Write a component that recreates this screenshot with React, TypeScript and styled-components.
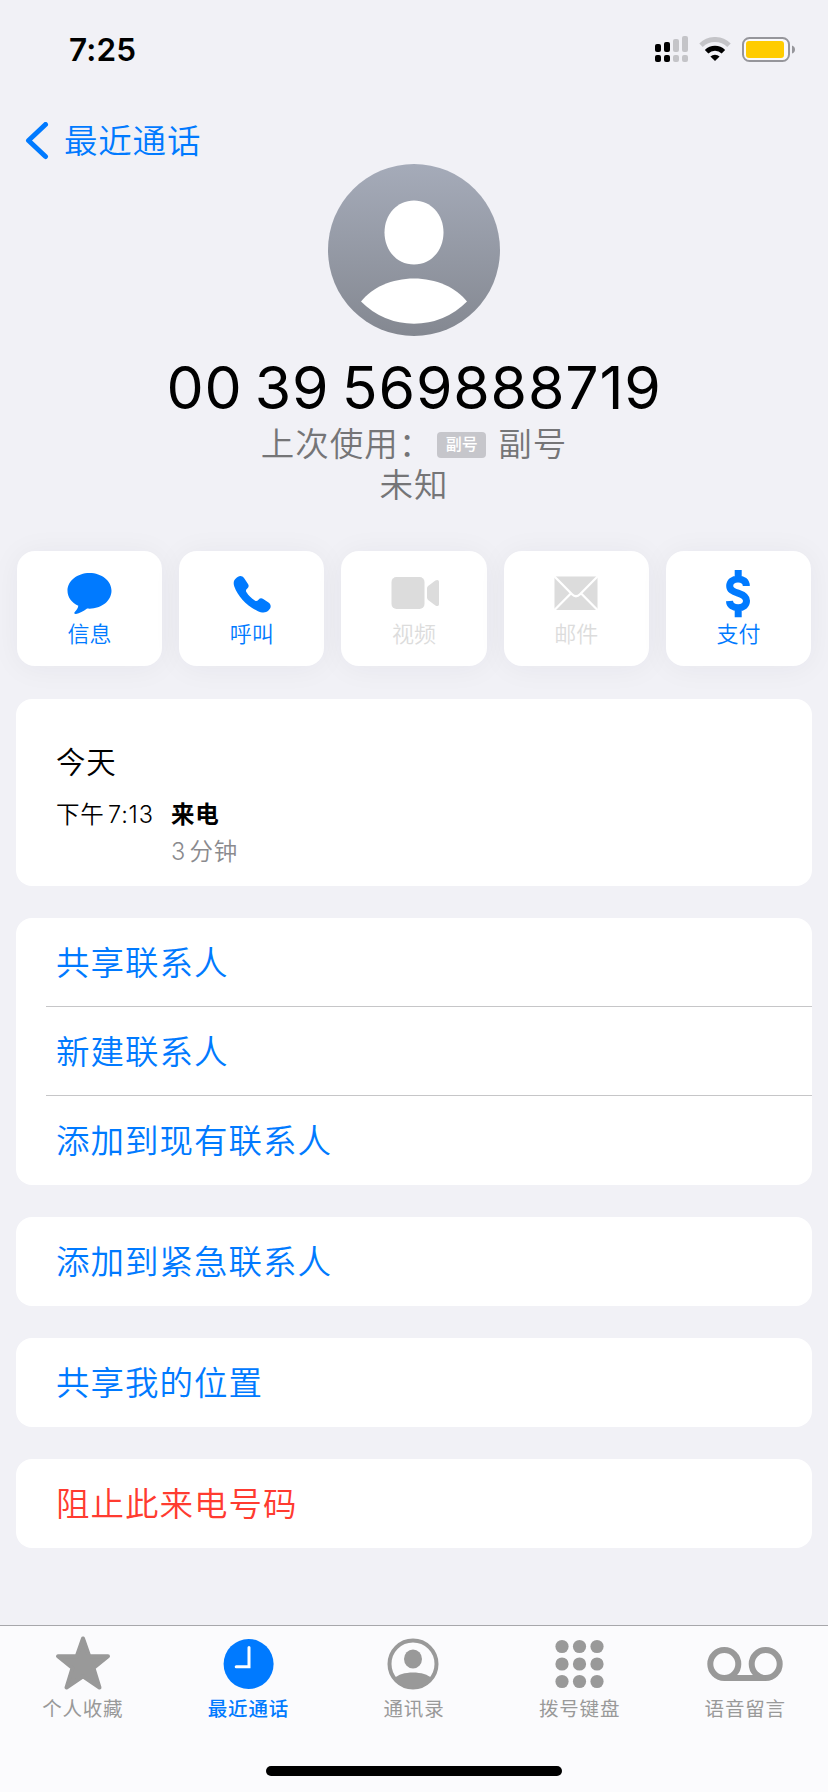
import React from "react";
import styled, { createGlobalStyle } from "styled-components";

const BLUE = "#007aff";
const RED = "#ff3b30";
const GREY = "#999999";
const FAINT = "#dcdcdc";

const GlobalStyle = createGlobalStyle`
  * { box-sizing: border-box; }
  body {
    margin: 0;
    background: #f1f1f6;
    color: #000;
    font-family: Inter, "Noto Sans CJK SC", sans-serif;
    -webkit-font-smoothing: antialiased;
  }
`;

const Screen = styled.div`
  width: 828px;
  height: 1792px;
  display: flex;
  flex-direction: column;
  overflow: hidden;
`;

const StatusBar = styled.header`
  height: 100px;
  padding: 0 32px 1px 69px;
  display: flex;
  align-items: center;
  justify-content: space-between;
`;

const Clock = styled.time`
  font-size: 31.5px;
  font-weight: 600;
  letter-spacing: 0.2px;
`;

const StatusIcons = styled.div`
  display: flex;
  align-items: center;
  gap: 11px;
`;

const BackLink = styled.a`
  height: 64px;
  padding: 17px 0 0 25px;
  display: flex;
  align-items: center;
  gap: 15px;
  color: ${BLUE};
  font-size: 33.5px;
  font-weight: 350;
  line-height: 48px;
  letter-spacing: 0.8px;
`;

const Profile = styled.section`
  height: 387px;
  display: flex;
  flex-direction: column;
  align-items: center;
`;

const PhoneNumber = styled.h1`
  margin: 17px 0 1px;
  font-size: 59px;
  font-weight: 400;
  line-height: 70px;
  letter-spacing: 0.8px;
  word-spacing: -5px;
  white-space: pre;
`;

const ProfileLine = styled.p`
  margin: 0;
  height: 41px;
  display: flex;
  align-items: center;
  color: #757577;
  font-size: 33.5px;
  font-weight: 350;
  line-height: 41px;
  letter-spacing: 1px;
`;

const LineBadge = styled.span`
  width: 49px;
  height: 26px;
  margin: 0 12px 0 4px;
  border-radius: 4px;
  background: #c6c6cb;
  color: #fff;
  font-size: 16px;
  font-weight: 500;
  line-height: 25px;
  letter-spacing: 0;
  text-align: center;
`;

const Actions = styled.nav`
  padding: 0 17px;
  display: grid;
  grid-template-columns: repeat(5, 1fr);
  gap: 17px;
`;

const Action = styled.button<{ $off?: boolean }>`
  height: 115px;
  padding: 17px 0 0;
  border: 0;
  border-radius: 18px;
  background: #fff;
  box-shadow: 0 2px 30px rgba(40, 40, 50, 0.05);
  display: flex;
  flex-direction: column;
  align-items: center;
  color: ${(p) => (p.$off ? FAINT : BLUE)};
  font-family: inherit;
  font-size: 22px;
  font-weight: 350;
  line-height: 32px;
`;

const Card = styled.section`
  margin: 33px 16px 0;
  border-radius: 16px;
  background: #fff;
  overflow: hidden;
  & + & { margin-top: 32px; }
`;

const CallLog = styled(Card)`
  height: 187px;
  padding: 43px 40px 0;
`;

const Day = styled.h2`
  margin: 0;
  font-size: 29.5px;
  font-weight: 350;
  line-height: 41px;
  letter-spacing: 0.8px;
`;

const Call = styled.div`
  margin-top: 13px;
  display: grid;
  grid-template-columns: 115px 1fr;
  font-size: 23.5px;
  font-weight: 350;
  line-height: 37px;
  letter-spacing: 0.8px;
  word-spacing: -4px;
`;

const CallKind = styled.span`
  font-weight: 600;
`;

const CallLength = styled.span`
  grid-column: 2;
  color: #8a8a8e;
`;

const Row = styled.a<{ $danger?: boolean }>`
  height: 88px;
  padding: 0 0 4px 40px;
  display: flex;
  align-items: center;
  color: ${(p) => (p.$danger ? RED : BLUE)};
  font-size: 33.5px;
  font-weight: 350;
  letter-spacing: 1px;
  &:last-child { height: 89px; }
`;

const Divider = styled.hr`
  height: 1px;
  margin: 0 0 0 30px;
  border: 0;
  background: #c6c6c8;
`;

const TabBar = styled.footer`
  margin-top: auto;
  height: 167px;
  border-top: 1px solid #a7a7ab;
  background: #fbfbfd;
  display: flex;
  flex-direction: column;
  align-items: center;
`;

const Tabs = styled.nav`
  width: 100%;
  height: 140px;
  display: grid;
  grid-template-columns: repeat(5, 1fr);
`;

const Tab = styled.a<{ $active?: boolean }>`
  padding: 9px 0 0;
  display: flex;
  flex-direction: column;
  align-items: center;
  color: ${(p) => (p.$active ? BLUE : GREY)};
  font-size: 19.5px;
  font-weight: ${(p) => (p.$active ? 500 : 400)};
  line-height: 28px;
  letter-spacing: 0.8px;
`;

const HomeIndicator = styled.div`
  width: 296px;
  height: 10px;
  border-radius: 5px;
  background: #000;
`;

const SignalIcon = () => (
  <svg width="33" height="27" viewBox="0 0 33 27">
    {[8, 6, 3, 0].map((top, i) => (
      <g key={top} fill={i < 2 ? "#000" : "#c4c4c8"}>
        <rect x={i * 9} y={top} width="6" height={16 - top} rx="2" />
        <rect x={i * 9} y="19" width="6" height="7" rx="2" />
      </g>
    ))}
  </svg>
);

const WifiIcon = () => (
  <svg width="32" height="25" viewBox="0 0 32 25" fill="none" strokeWidth="5">
    <path d="M2 8.2a20 20 0 0 1 28 0" stroke="#c4c4c8" />
    <path d="M7.6 14.7a12 12 0 0 1 16.8 0" stroke="#000" />
    <path d="M16 24l-4.6-4.5a6.7 6.7 0 0 1 9.2 0z" fill="#000" />
  </svg>
);

const BatteryIcon = () => (
  <svg width="54" height="25" viewBox="0 0 54 25">
    <rect x="1" y="1" width="46" height="23" rx="6.5" fill="#fff" fillOpacity=".6" stroke="#96969b" strokeWidth="2" />
    <rect x="4" y="4" width="38" height="17" rx="3" fill="#ffcc00" />
    <path d="M50 8.500q3 1 3 4t-3 4z" fill="#96969b" />
  </svg>
);

const ChevronIcon = () => (
  <svg width="24" height="38" viewBox="0 0 24 38">
    <path d="M20.500 2.500 3.500 18.500l17 16" fill="none" stroke={BLUE} strokeWidth="5" strokeLinecap="round" strokeLinejoin="round" />
  </svg>
);

const Avatar = () => (
  <svg width="172" height="172" viewBox="0 0 172 172">
    <defs>
      <linearGradient id="avatar" x1="0" y1="0" x2="0" y2="1">
        <stop offset="0" stopColor="#a5abb9" />
        <stop offset="1" stopColor="#848891" />
      </linearGradient>
    </defs>
    <circle cx="86" cy="86" r="86" fill="url(#avatar)" />
    <path d="M86 36.500c17 0 29.500 14 29.500 32s-12.500 32-29.500 32-29.500-14-29.500-32 12.500-32 29.500-32z" fill="#fff" />
    <path d="M33 137.500c11-14 31-23 53-23s42 9 53 23a74.500 74.500 0 0 1-106 0z" fill="#fff" />
  </svg>
);

const ActionIcon = ({ children }: { children: React.ReactNode }) => (
  <svg width="52" height="50" viewBox="0 0 52 50" fill="currentColor">{children}</svg>
);

const actions = [
  {
    label: "信息",
    icon: <path d="M25.500 5c12.200 0 22 7.900 22 17.800s-9.800 17.900-22 17.900c-.8 0-1.600 0-2.400-.1-3.800 2.800-7.600 5-11.100 5.400-1.900.1-2.200-1-1.200-2 1.800-1.700 3.200-3.800 3.500-6.200-6.800-3.300-10.800-8.600-10.800-15C3.500 12.900 13.300 5 25.500 5z" />,
  },
  {
    label: "呼叫",
    icon: <path d="M9.800 10.500c2.800-3.300 6.200-3.400 8.400-.3l3.800 5.700c1.100 1.800.8 3.300-.7 4.700-1.500 1.300-1.700 2.300-.8 3.700 2.100 3.300 5 6.100 8.300 8.200 1.400.9 2.400.7 3.700-.8 1.400-1.500 2.900-1.800 4.700-.7l5.300 3.500c3 2.200 2.900 5.600-.3 8.200-2.500 2.200-6 2.300-10.700.2C20.100 37.600 11.800 28 8.300 18.500c-1.200-3.500-.6-6.200 1.500-8z" />,
  },
  {
    label: "视频",
    off: true,
    icon: (
      <>
        <rect x="3.500" y="9" width="33" height="32" rx="5" />
        <path d="M39 20.500c0-1 .4-1.800 1.100-2.400l7.300-5.500c1.800-1.300 3.600-.7 3.600 1.400v22c0 2.100-1.800 2.700-3.600 1.400l-7.300-5.500c-.7-.6-1.100-1.400-1.100-2.400z" />
      </>
    ),
  },
  {
    label: "邮件",
    off: true,
    icon: (
      <>
        <rect x="4.500" y="8.500" width="43" height="33.500" rx="1" />
        <path d="M4 8l18 18.200q4 4 8 0L48 8M4 42.500l16.800-17M48 42.500l-16.800-17" fill="none" stroke="#fff" strokeWidth="2.300" />
      </>
    ),
  },
  {
    label: "支付",
    icon: (
      <path
        d="M34.300 18C34.300 13.500 31 11 26 11S17.700 13.700 17.700 18c0 3.800 2.900 5.400 8.400 7.200s8.400 3.600 8.400 7.600c0 4.400-3.400 6.900-8.400 6.900s-8.400-2.400-8.600-6.700M26.200 2v8M26.200 40v9.300"
        fill="none"
        stroke="currentColor"
        strokeWidth="7"
      />
    ),
  },
];

const TabIcon = ({ children, width = 60 }: { children: React.ReactNode; width?: number }) => (
  <svg width={width} height="60" viewBox={`0 0 ${width} 60`} fill="currentColor">{children}</svg>
);

const tabs = [
  {
    label: "个人收藏",
    icon: <TabIcon><path d="M30 3.500l6.300 17.800H55L40.500 33l6 19.500L30 41.300 13.500 52.500l6-19.500L5 21.300h18.700z" stroke="currentColor" strokeWidth="4" strokeLinejoin="round" /></TabIcon>,
  },
  {
    label: "最近通话",
    active: true,
    icon: (
      <TabIcon>
        <circle cx="30.600" cy="29" r="25" />
        <path d="M31 12.500v19.200H18.200" fill="none" stroke="#fff" strokeWidth="3" strokeLinecap="round" />
      </TabIcon>
    ),
  },
  {
    label: "通讯录",
    icon: (
      <TabIcon>
        <circle cx="29" cy="29" r="23.500" fill="none" stroke="currentColor" strokeWidth="4" />
        <ellipse cx="29" cy="24" rx="9" ry="9.500" />
        <path d="M10 43.500c4-4 11-6 19-6s15 2 19 6a24 24 0 0 1-38 0z" />
      </TabIcon>
    ),
  },
  {
    label: "拨号键盘",
    icon: (
      <TabIcon>
        {[0, 1, 2].flatMap((r) => [0, 1, 2].map((c) => <circle key={`${r}${c}`} cx={12 + c * 17.500} cy={11.500 + r * 17.500} r="6.600" />))}
      </TabIcon>
    ),
  },
  {
    label: "语音留言",
    icon: (
      <TabIcon width={80}>
        <g fill="none" stroke="currentColor" strokeWidth="6">
          <circle cx="19.300" cy="29" r="14" />
          <circle cx="60.700" cy="29" r="14" />
          <path d="M19.300 43h41.400" />
        </g>
      </TabIcon>
    ),
  },
];

export default function App() {
  return (
    <Screen>
      <GlobalStyle />
      <StatusBar>
        <Clock>7:25</Clock>
        <StatusIcons>
          <SignalIcon />
          <WifiIcon />
          <BatteryIcon />
        </StatusIcons>
      </StatusBar>
      <BackLink>
        <ChevronIcon />
        <span>最近通话</span>
      </BackLink>
      <Profile>
        <Avatar />
        <PhoneNumber>00 39 569888719</PhoneNumber>
        <ProfileLine>
          <span>上次使用：</span>
          <LineBadge>副号</LineBadge>
          <span>副号</span>
        </ProfileLine>
        <ProfileLine>未知</ProfileLine>
      </Profile>
      <Actions>
        {actions.map((a) => (
          <Action key={a.label} $off={a.off}>
            <ActionIcon>{a.icon}</ActionIcon>
            <span>{a.label}</span>
          </Action>
        ))}
      </Actions>
      <CallLog>
        <Day>今天</Day>
        <Call>
          <span>下午 7:13</span>
          <CallKind>来电</CallKind>
          <CallLength>3 分钟</CallLength>
        </Call>
      </CallLog>
      <Card>
        <Row>共享联系人</Row>
        <Divider />
        <Row>新建联系人</Row>
        <Divider />
        <Row>添加到现有联系人</Row>
      </Card>
      <Card>
        <Row>添加到紧急联系人</Row>
      </Card>
      <Card>
        <Row>共享我的位置</Row>
      </Card>
      <Card>
        <Row $danger>阻止此来电号码</Row>
      </Card>
      <TabBar>
        <Tabs>
          {tabs.map((t) => (
            <Tab key={t.label} $active={t.active}>
              {t.icon}
              <span>{t.label}</span>
            </Tab>
          ))}
        </Tabs>
        <HomeIndicator />
      </TabBar>
    </Screen>
  );
}
